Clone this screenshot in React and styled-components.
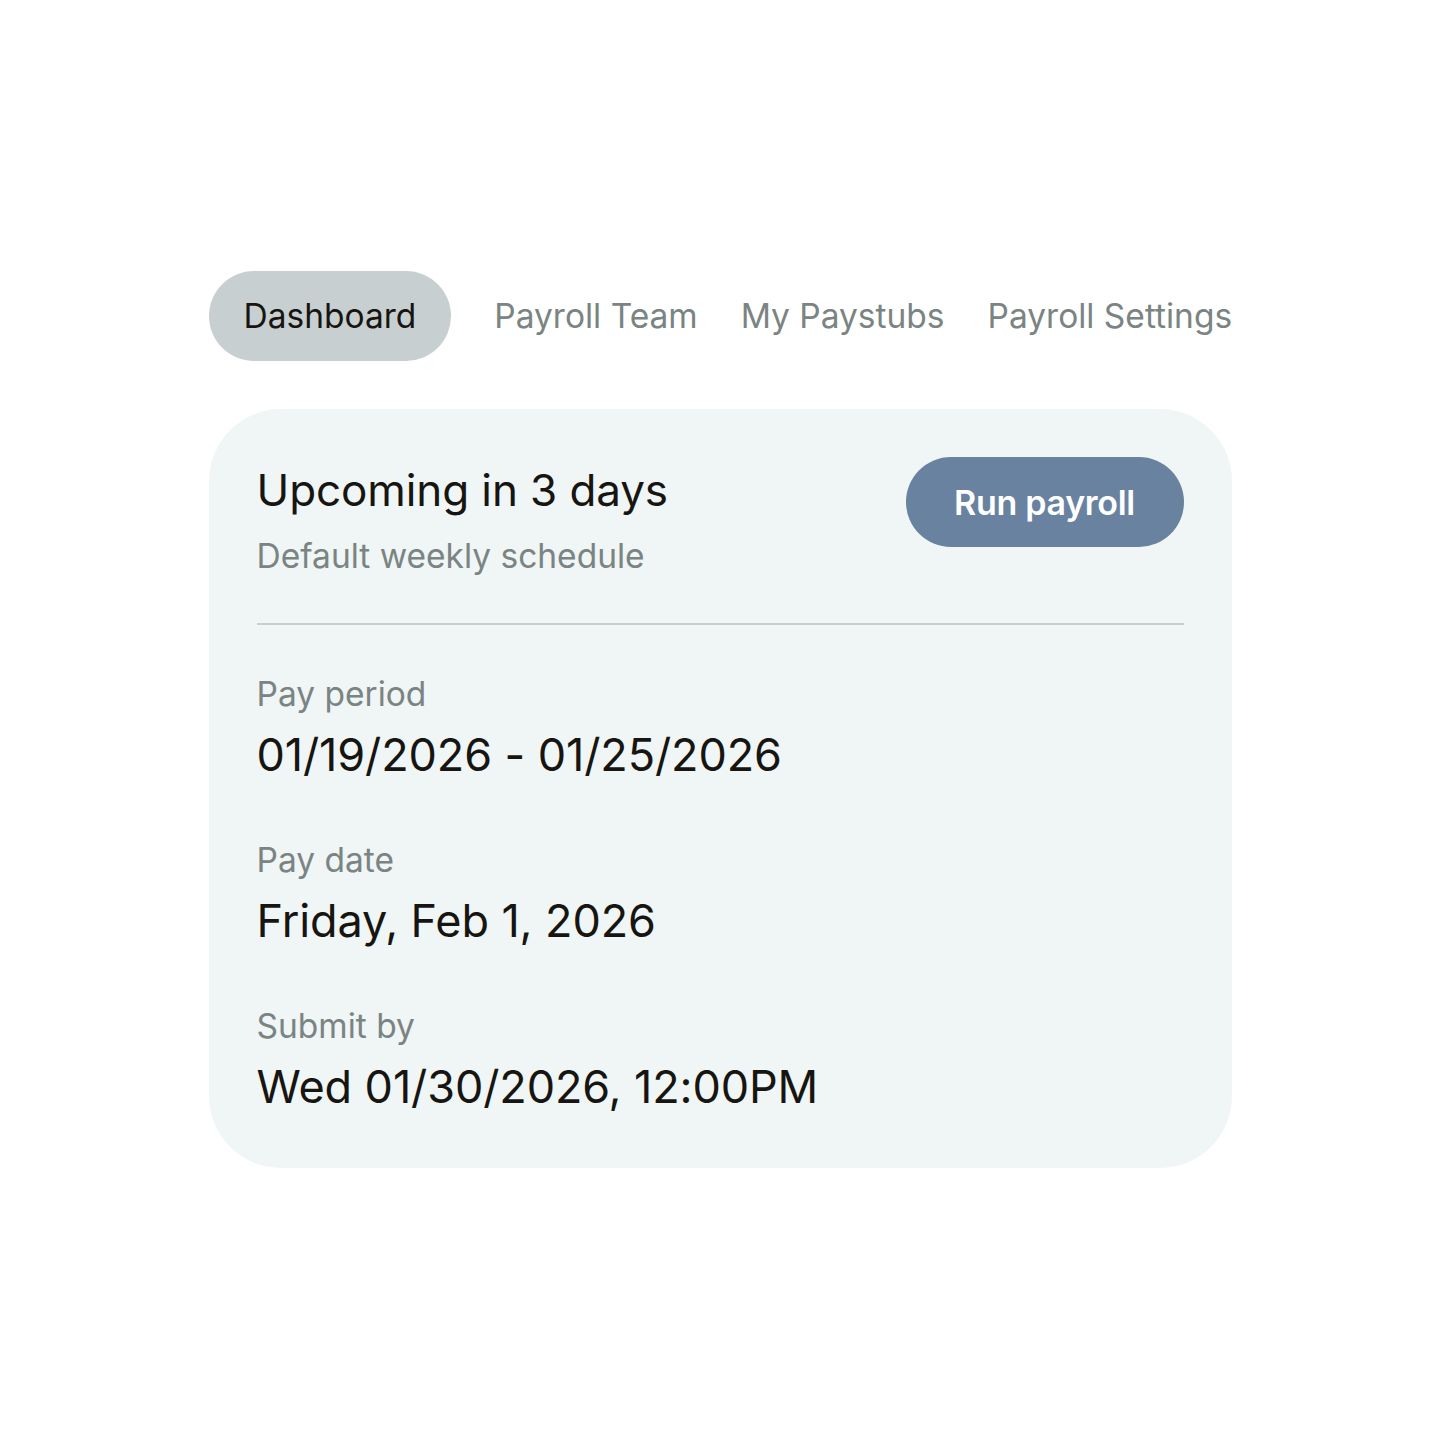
import styled, { createGlobalStyle } from "styled-components"

const GlobalStyle = createGlobalStyle`
    html, body {
        margin: 0;
        padding: 0;
        background: #ffffff;
        font-family: Inter, "Noto Sans", "Liberation Sans", sans-serif;
        color: #171511;
    }
`

const tabs = ["Dashboard", "Payroll Team", "My Paystubs", "Payroll Settings"]

const fields = [
    { label: "Pay period", value: "01/19/2026 - 01/25/2026" },
    { label: "Pay date", value: "Friday, Feb 1, 2026" },
    { label: "Submit by", value: "Wed 01/30/2026, 12:00PM" },
]

const App = () => {
    return (
        <Page>
            <GlobalStyle />
            <Panel>
                <Tabs>
                    {tabs.map((t, i) => (
                        <Tab key={t} $active={i === 0}>
                            {t}
                        </Tab>
                    ))}
                </Tabs>
                <Card>
                    <Header>
                        <Heading>
                            <Title>Upcoming in 3 days</Title>
                            <Subtitle>Default weekly schedule</Subtitle>
                        </Heading>
                        <RunButton>Run payroll</RunButton>
                    </Header>
                    <Divider />
                    <Fields>
                        {fields.map((f) => (
                            <Field key={f.label}>
                                <Label>{f.label}</Label>
                                <Value>{f.value}</Value>
                            </Field>
                        ))}
                    </Fields>
                </Card>
            </Panel>
        </Page>
    )
}

const Page = styled.div`
    min-height: 1440px;
    display: flex;
    justify-content: center;
    padding-top: 271px;
    box-sizing: border-box;
`

const Panel = styled.div`
    width: 1023px;
    display: flex;
    flex-direction: column;
    gap: 48px;
`

const Tabs = styled.div`
    display: flex;
    align-items: center;
    gap: 43px;
`

const Tab = styled.div`
    height: 90px;
    display: flex;
    align-items: center;
    padding: 0 ${(p) => (p.$active ? "35px" : "0")};
    border-radius: 45px;
    font-size: 33.5px;
    white-space: nowrap;
    background-color: ${(p) => (p.$active ? "#c8cfd0" : "transparent")};
    color: ${(p) => (p.$active ? "#171511" : "#7a8482")};
`

const Card = styled.div`
    background-color: #f0f5f5;
    border-radius: 72px;
    padding: 48px 48px 55px;
`

const Header = styled.div`
    display: flex;
    justify-content: space-between;
    align-items: flex-start;
`

const Heading = styled.div`
    display: flex;
    flex-direction: column;
    padding-top: 7px;
`

const Title = styled.div`
    font-size: 44px;
    line-height: 53px;
    letter-spacing: -0.1px;
`

const Subtitle = styled.div`
    margin-top: 20px;
    font-size: 33.5px;
    line-height: 38px;
    color: #7a8482;
`

const RunButton = styled.button`
    width: 278px;
    height: 90px;
    border: none;
    border-radius: 45px;
    background-color: #6882a0;
    color: #ffffff;
    font-family: inherit;
    font-size: 34px;
    font-weight: 600;
    letter-spacing: -0.3px;
    cursor: pointer;
`

const Divider = styled.div`
    height: 2px;
    background-color: #c8cfd0;
    margin-top: 48px;
`

const Fields = styled.div`
    display: flex;
    flex-direction: column;
    gap: 60px;
    margin-top: 50px;
`

const Field = styled.div`
    display: flex;
    flex-direction: column;
    gap: 15px;
`

const Label = styled.div`
    font-size: 33.5px;
    line-height: 38px;
    color: #7a8482;
`

const Value = styled.div`
    font-size: 45px;
    line-height: 53px;
    letter-spacing: -0.1px;
`

export default App
